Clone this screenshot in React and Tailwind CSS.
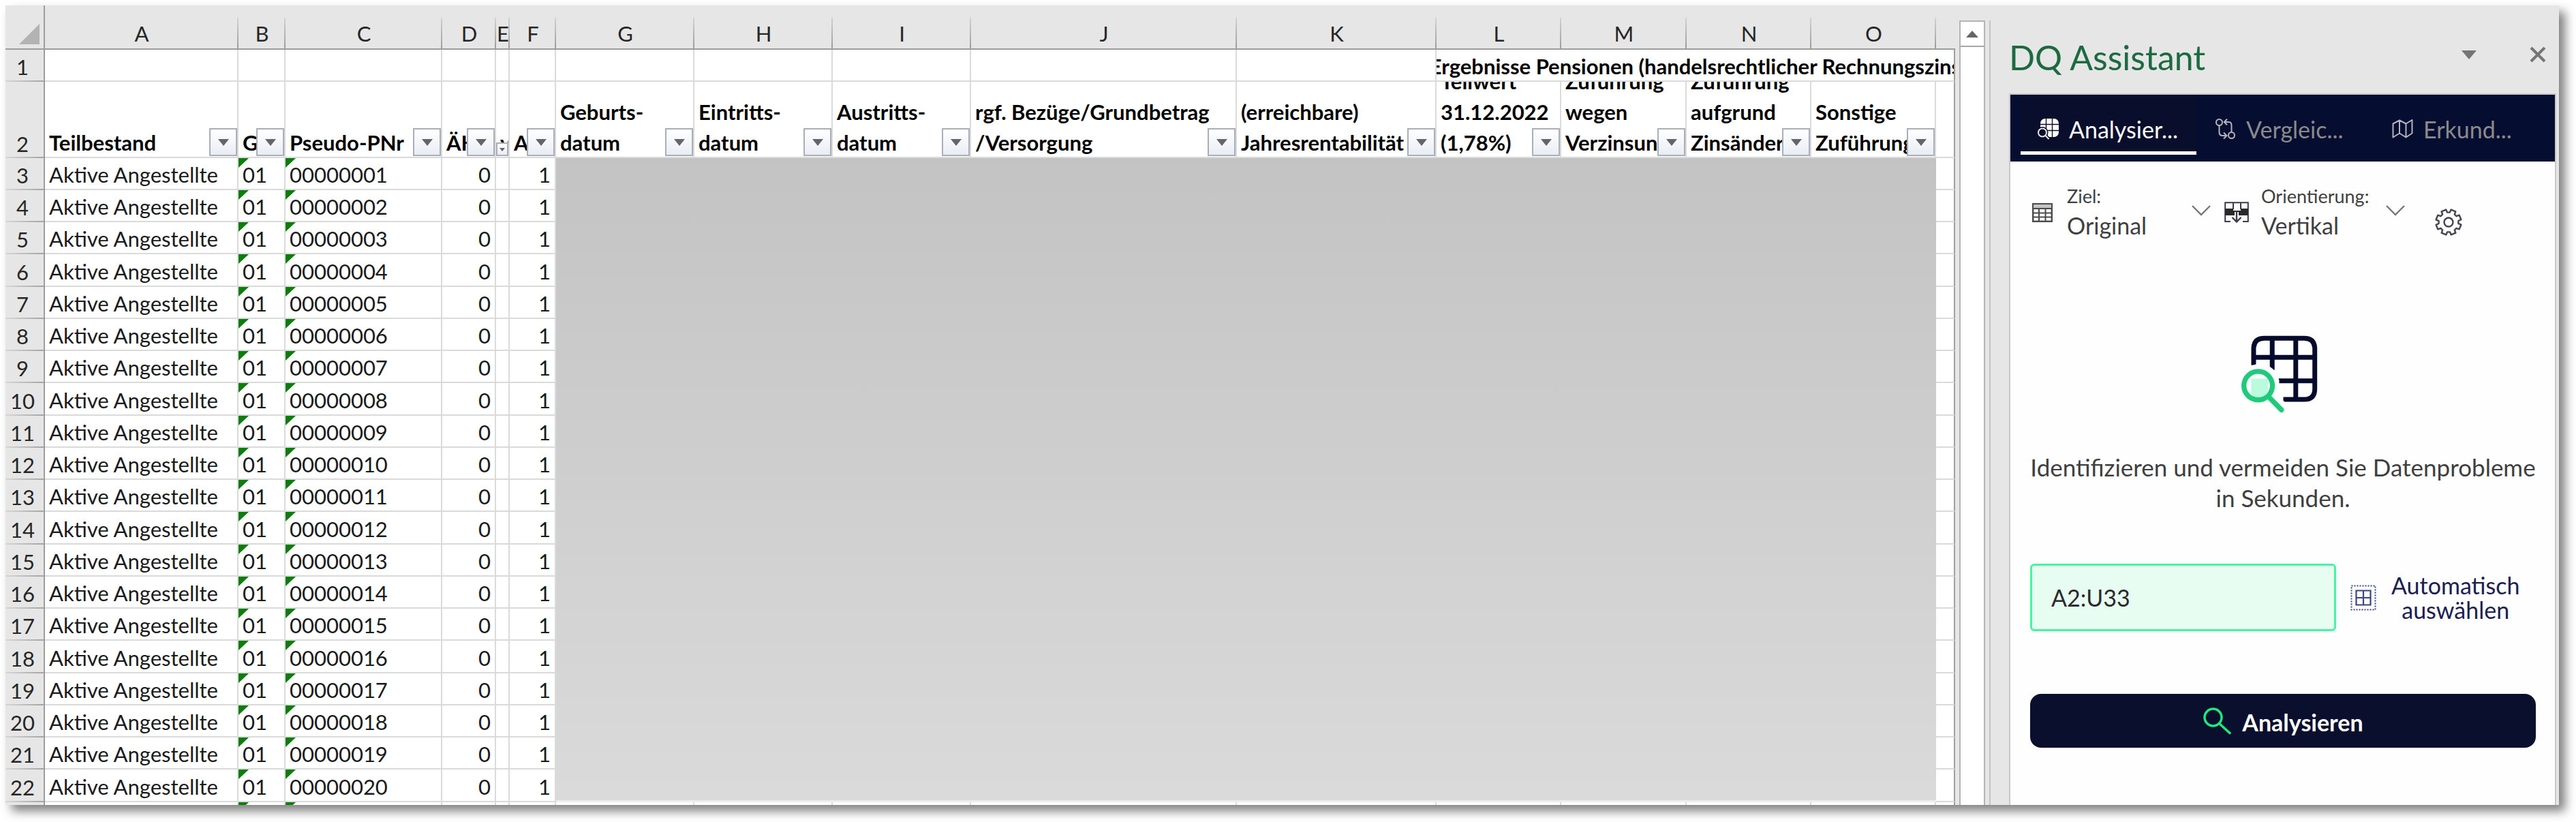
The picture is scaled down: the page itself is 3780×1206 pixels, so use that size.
const COLUMNS = [
  { letter: "A", width: 284, lines: ["Teilbestand"] },
  { letter: "B", width: 69, lines: ["Gr"] },
  { letter: "C", width: 230, lines: ["Pseudo-PNr"] },
  { letter: "D", width: 79, lines: ["ÄHI"] },
  { letter: "E", width: 20, lines: ["v"], narrow: true },
  { letter: "F", width: 68, lines: ["AV"] },
  { letter: "G", width: 203, lines: ["Geburts-", "datum"] },
  { letter: "H", width: 203, lines: ["Eintritts-", "datum"] },
  { letter: "I", width: 203, lines: ["Austritts-", "datum"] },
  { letter: "J", width: 390, lines: ["rgf. Bezüge/Grundbetrag", "/Versorgung"] },
  { letter: "K", width: 293, lines: ["(erreichbare)", "Jahresrentabilität"] },
  { letter: "L", width: 183, lines: ["Teilwert", "31.12.2022", "(1,78%)"] },
  { letter: "M", width: 184, lines: ["Zuführung", "wegen", "Verzinsung"] },
  { letter: "N", width: 183, lines: ["Zuführung", "aufgrund", "Zinsänderung"] },
  { letter: "O", width: 183, lines: ["Sonstige", "Zuführung"] },
];

const ROWS = Array.from({ length: 20 }, (_, i) => ({
  number: i + 3,
  id: String(i + 1).padStart(8, "0"),
}));

const GRID = "border-r-2 border-b-2 border-[#dadada] px-0 pb-0";
const CELL = GRID + " pt-0";
const TEXT_CELL = GRID + " pt-1 leading-[41px]";
const ROW_HEAD =
  "bg-[#e6e6e6] bg-[linear-gradient(to_right,#d6d6d6,#a4a4a4)] bg-[length:100%_2px] bg-bottom bg-no-repeat border-r-2 border-[#9c9c9c] pt-1 pr-1.5 pb-0 pl-0 text-center leading-[41px] font-normal text-[#262626]";

function FilterButton({ label, narrow }) {
  return (
    <button
      type="button"
      aria-label={`Filter ${label}`}
      className={
        "absolute right-0 bottom-px flex items-center justify-center border-2 border-[#a9afb8] bg-linear-to-b from-white to-[#e9edf4] " +
        (narrow ? "h-5 w-[18px]" : "h-[41px] w-[41px]")
      }
    >
      <svg viewBox="0 0 16 10" className={narrow ? "w-2" : "w-4"} aria-hidden="true">
        <path d="M0 0h16L8 10z" fill="#62666b" />
      </svg>
    </button>
  );
}

function TextMark() {
  return (
    <svg viewBox="0 0 15 14" className="absolute top-0 left-0 w-[15px]" aria-hidden="true">
      <path d="M0 0h15L0 14z" fill="#0b7d0b" />
    </svg>
  );
}

function DataRow({ row, index, children }) {
  return (
    <tr className={index % 4 === 3 ? "h-12" : "h-[47px]"}>
      <th scope="row" className={ROW_HEAD}>{row.number}</th>
      <td className={TEXT_CELL}><span className="pl-1.5">Aktive Angestellte</span></td>
      <td className={TEXT_CELL + " relative"}><TextMark /><span className="pl-1.5">01</span></td>
      <td className={TEXT_CELL + " relative"}><TextMark /><span className="pl-1.5">{row.id}</span></td>
      <td className={TEXT_CELL + " text-right"}><span className="pr-1.5">0</span></td>
      <td className={CELL} />
      <td className={TEXT_CELL + " text-right"}><span className="pr-1.5">1</span></td>
      {children}
      <td className={CELL + " border-r-[#a0a0a0]"} />
    </tr>
  );
}

function Sheet() {
  return (
    <div className="min-w-0 flex-1 overflow-hidden">
      <table className="w-full table-fixed border-separate border-spacing-0 bg-white text-[31px] leading-[45px] whitespace-nowrap text-[#1a1a1a]">
        <colgroup>
          <col className="w-[58px]" />
          {COLUMNS.map((c) => (
            <col key={c.letter} style={{ width: c.width }} />
          ))}
          <col />
        </colgroup>
        <thead>
          <tr className="h-[65px]">
            <th className="border-r-2 border-b-2 border-[#9c9c9c] bg-[#e6e6e6] p-0">
              <svg viewBox="0 0 30 30" className="mt-5 ml-5 w-[30px]" aria-hidden="true">
                <path d="M30 0v30H0z" fill="#b3b3b3" />
              </svg>
            </th>
            {COLUMNS.map((c) => (
              <th
                key={c.letter}
                scope="col"
                className="overflow-hidden border-b-2 border-[#9c9c9c] bg-[#e6e6e6] bg-[linear-gradient(to_bottom,transparent_16px,#cfcfcf_20px,#9c9c9c)] bg-[length:2px_100%] bg-right bg-no-repeat px-0 pt-5 pb-0 text-center leading-[43px] font-normal text-[#262626]"
              >
                {c.letter}
              </th>
            ))}
            <th className="border-b-2 border-[#9c9c9c] bg-[#e6e6e6] p-0" />
          </tr>
        </thead>
        <tbody>
          <tr className="h-[47px]">
            <th scope="row" className={ROW_HEAD}>1</th>
            {COLUMNS.slice(0, 11).map((c) => (
              <td key={c.letter} className={CELL} />
            ))}
            <td colSpan={5} className={TEXT_CELL + " border-r-[#a0a0a0]"}>
              <div className="flex justify-center overflow-hidden font-bold text-black">
                <span>Ergebnisse Pensionen (handelsrechtlicher Rechnungszins</span>
              </div>
            </td>
          </tr>
          <tr className="h-28">
            <th scope="row" className={ROW_HEAD + " align-bottom"}>2</th>
            {COLUMNS.map((c) => (
              <td key={c.letter} className={CELL + " align-bottom"}>
                <div className="relative flex h-[110px] flex-col justify-end overflow-hidden pl-1.5 leading-[49px] font-bold text-black">
                  {c.lines.map((line) => (
                    <span key={line} className="h-[45px] shrink-0">{line}</span>
                  ))}
                  <FilterButton label={c.letter} narrow={c.narrow} />
                </div>
              </td>
            ))}
            <td className={CELL + " border-r-[#a0a0a0]"} />
          </tr>
          {ROWS.map((row, i) => (
            <DataRow key={row.id} row={row} index={i}>
              {i === 0 && (
                <td
                  colSpan={9}
                  rowSpan={20}
                  className="border-b-3 border-[#ededed] bg-linear-to-b from-[#c3c3c3] to-[#dadada] p-0"
                />
              )}
            </DataRow>
          ))}
          <tr className="h-[47px]">
            <th className={ROW_HEAD} />
            <td className={CELL} />
            <td className={CELL + " relative"}><TextMark /></td>
            <td className={CELL + " relative"}><TextMark /></td>
            {COLUMNS.slice(3).map((c) => (
              <td key={c.letter} className={CELL} />
            ))}
            <td className={CELL + " border-r-[#a0a0a0]"} />
          </tr>
        </tbody>
      </table>
    </div>
  );
}

function ScrollBar() {
  return (
    <div className="mx-1.5 mt-[22px] flex w-[38px] shrink-0 flex-col border-x-2 border-t-2 border-[#b4b4b4] bg-white">
      <button
        type="button"
        aria-label="Nach oben"
        className="flex h-[37px] items-center justify-center border-b-2 border-[#a6a6a6]"
      >
        <svg viewBox="0 0 18 10" className="w-[18px]" aria-hidden="true">
          <path d="M9 0l9 10H0z" fill="#666" />
        </svg>
      </button>
    </div>
  );
}

function AnalyzeIcon() {
  return (
    <svg viewBox="0 0 31 31" className="w-[31px] shrink-0" fill="none" aria-hidden="true">
      <rect x="4" y="0" width="27" height="27" rx="7" fill="#fff" />
      <path d="M12.500 0v27M21.500 0v27M4 8.500h27M4 17.500h27" stroke="#0a0e2c" strokeWidth="1.400" />
      <circle cx="7" cy="20.500" r="8.500" fill="#0a0e2c" />
      <path d="M11 24.500l6 6" stroke="#0a0e2c" strokeWidth="5" />
      <circle cx="7" cy="20.500" r="6" stroke="#e8e8ee" strokeWidth="2" />
      <path d="M11.500 25l5 5" stroke="#e8e8ee" strokeWidth="2" />
    </svg>
  );
}

function CompareIcon() {
  return (
    <svg viewBox="0 0 31 31" className="w-[31px] shrink-0" fill="none" stroke="#b4b4bc" strokeWidth="2" aria-hidden="true">
      <circle cx="6.500" cy="5.500" r="4.500" />
      <circle cx="24.500" cy="24.500" r="4.500" />
      <path d="M6.500 10v10q0 5 5 5h5M13 20.500l4.500 4.500-4.500 4.500" />
      <path d="M24.500 20V10q0-5-4-5h-6M18 .800L13.800 5l4.200 4.200" />
    </svg>
  );
}

function MapIcon() {
  return (
    <svg viewBox="0 0 31 31" className="w-[31px] shrink-0" fill="none" stroke="#b4b4bc" strokeWidth="2" strokeLinejoin="round" aria-hidden="true">
      <path d="M1.500 7.500L11 2.500l9.500 5L29.500 2v19.500l-9 6-9.500-6-9.500 6zM11 2.500v19M20.500 7.500v20" />
    </svg>
  );
}

function TableIcon() {
  return (
    <svg viewBox="0 0 30 28" className="w-[30px]" aria-hidden="true">
      <rect x="1.200" y="1.200" width="27.600" height="25.600" fill="#fff" stroke="#4a4a4a" strokeWidth="2.400" />
      <path d="M2 2h26v5H2z" fill="#c4c4c4" />
      <path d="M1 8h28M1 14.500h28M1 20.500h28M10 8v19M19.500 8v19" stroke="#4a4a4a" strokeWidth="2" />
    </svg>
  );
}

function OrientationIcon() {
  return (
    <svg viewBox="0 0 36 31" className="w-9" fill="none" stroke="#3c3a48" strokeWidth="2" aria-hidden="true">
      <path d="M9 29H1.200V1.200h33.600V29H27M13 1v10M24 1v10" />
      <path d="M1 10h12v3h11v-3h11v10H21v-5h-6v5H1z" fill="#2a2a2a" stroke="none" />
      <path d="M18 14v15M11.500 23l6.500 6.500 6.500-6.500" strokeWidth="2.400" />
    </svg>
  );
}

function GearIcon() {
  const teeth = 8;
  const points = [];
  for (let i = 0; i < teeth; i++) {
    const a = (i * 2 * Math.PI) / teeth;
    [[-0.260, 14.500], [-0.190, 18.800], [0.190, 18.800], [0.260, 14.500]].forEach(([d, r]) => {
      points.push(`${(20 + r * Math.sin(a + d + 0.39)).toFixed(1)},${(20 - r * Math.cos(a + d + 0.39)).toFixed(1)}`);
    });
  }
  return (
    <svg viewBox="0 0 40 40" className="w-10" fill="none" stroke="#45434f" strokeWidth="2.400" strokeLinejoin="round" aria-hidden="true">
      <polygon points={points.join(" ")} />
      <circle cx="20" cy="20" r="6.500" />
    </svg>
  );
}

function HeroIcon() {
  return (
    <svg viewBox="145 30 370 350" className="mx-auto mt-[137px] w-[123px]" fill="none" aria-hidden="true">
      <g stroke="#050b2b" strokeWidth="21">
        <path d="M199 168V96q0-47 47-47h176q47 0 47 47v176q0 47-47 47h-92" />
        <path d="M281 49v140M385 49v270M199 133h270M308 237h161" />
      </g>
      <path d="M180 176q30-20 70-10 50 15 62 70 0 35-10 60l40 40-40 30-120-60z" fill="#fefefe" />
      <path d="M188 227h75v50q-15 34-45 34-24 0-30-20z" fill="#b9fbdc" />
      <circle cx="219" cy="258" r="63" stroke="#1ecb7b" strokeWidth="22" />
      <path d="M266 308l56 57" stroke="#1ecb7b" strokeWidth="22" strokeLinecap="round" />
    </svg>
  );
}

function SelectAreaIcon() {
  return (
    <svg viewBox="0 0 38 38" className="w-[38px] shrink-0" fill="none" stroke="#3b4581" aria-hidden="true">
      <rect x="1.500" y="1.500" width="35" height="35" strokeWidth="2" strokeDasharray="2 2" />
      <path d="M8.500 8.500h21v21h-21zM19 8.500v21M8.500 19h21" strokeWidth="2.200" />
    </svg>
  );
}

const TABS = [
  { label: "Analysier...", Icon: AnalyzeIcon, active: true },
  { label: "Vergleic...", Icon: CompareIcon },
  { label: "Erkund...", Icon: MapIcon },
];

function Picker({ id, label, value, icon }) {
  return (
    <div className="relative flex w-[265px] items-center gap-[18px]">
      <div className="flex w-9 shrink-0 justify-center">{icon}</div>
      <div className="flex min-w-0 flex-1 flex-col gap-0.5 text-[#3f3f3f]">
        <label htmlFor={id} className="text-[27px] leading-9">{label}</label>
        <select id={id} defaultValue={value} className="h-[45px] w-full appearance-none bg-transparent text-[34px] leading-[45px]">
          <option>{value}</option>
        </select>
      </div>
      <svg viewBox="0 0 28 16" className="pointer-events-none absolute top-[31px] right-0 w-7" fill="none" stroke="#777" strokeWidth="2.400" aria-hidden="true">
        <path d="M1 1l13 13L27 1" />
      </svg>
    </div>
  );
}

function Assistant() {
  return (
    <aside className="mr-1 flex w-[803px] shrink-0 flex-col">
      <header className="flex h-[129px] items-center pt-[23px] pr-[15px]">
        <h1 className="flex-1 text-[50px] leading-[60px] text-[#1b6a40]">DQ Assistant</h1>
        <button type="button" aria-label="Optionen" className="mr-[78px] mb-2">
          <svg viewBox="0 0 22 13" className="w-[22px]" aria-hidden="true">
            <path d="M0 0h22L11 13z" fill="#757575" />
          </svg>
        </button>
        <button type="button" aria-label="Schließen" className="mb-2">
          <svg viewBox="0 0 24 24" className="w-6" fill="none" stroke="#757575" strokeWidth="4" aria-hidden="true">
            <path d="M2 2l20 20M22 2L2 22" />
          </svg>
        </button>
      </header>

      <div className="flex-1 border-2 border-b-0 border-[#c8c8c8] bg-[#fefefe]">
        <nav className="flex h-[98px] gap-0.5 bg-[#050d30] pb-2.5 pl-[15px] text-[34px]">
          {TABS.map(({ label, Icon, active }) => (
            <button
              key={label}
              type="button"
              className={
                "flex w-[258px] items-center gap-[15px] border-b-[5px] pt-[17px] pl-[25px] " +
                (active ? "border-white bg-[#090e2c] text-white" : "border-transparent text-[#8b8b8b]")
              }
            >
              <Icon />
              {label}
            </button>
          ))}
        </nav>

        <div className="pr-7 pl-[29px]">
          <div className="flex gap-5 pt-[33px]">
            <Picker id="target" label="Ziel:" value="Original" icon={<TableIcon />} />
            <Picker id="orientation" label="Orientierung:" value="Vertikal" icon={<OrientationIcon />} />
            <button type="button" aria-label="Einstellungen" className="mb-[7px] ml-6 self-end">
              <GearIcon />
            </button>
          </div>

          <HeroIcon />

          <p className="mt-[57px] text-center text-[35px] leading-[45px] text-[#3f3f3f]">
            <span className="whitespace-nowrap">Identifizieren und vermeiden Sie Datenprobleme</span>
            <br />
            in Sekunden.
          </p>

          <div className="mt-[74px] flex items-center gap-[21px]">
            <input
              aria-label="Bereich"
              defaultValue="A2:U33"
              className="h-[99px] w-[449px] rounded-md border-[3px] border-[#44f5a1] bg-[#e7fdf2] pl-7 text-[34px] text-[#2a2a2a]"
            />
            <button type="button" className="flex items-center gap-[22px] text-[34px] leading-9 text-[#1b2050]">
              <SelectAreaIcon />
              <span>
                Automatisch
                <br />
                auswählen
              </span>
            </button>
          </div>

          <button
            type="button"
            className="mt-[92px] flex h-[79px] w-full items-center justify-center gap-4 rounded-2xl bg-[#090f2d] text-[34px] font-bold text-white"
          >
            <svg viewBox="0 0 42 40" className="w-[42px]" fill="none" stroke="#1eea7c" strokeWidth="3.500" aria-hidden="true">
              <circle cx="15.500" cy="14.500" r="12.500" />
              <path d="M24.500 23.500L41 38.500" />
            </svg>
            <span className="pt-1">Analysieren</span>
          </button>
        </div>
      </div>
    </aside>
  );
}

export default function App() {
  return (
    <div className="h-screen bg-white pt-2 pr-[25px] pb-[25px] pl-2 font-['Lato','Open_Sans',sans-serif]">
      <main className="flex h-full bg-[#e6e6e6] shadow-[9px_9px_14px_rgba(0,0,0,0.5)]">
        <Sheet />
        <ScrollBar />
        <div className="mt-[22px] mr-[27px] w-0.5 shrink-0 bg-[#c4c4c4]" />
        <Assistant />
      </main>
    </div>
  );
}
